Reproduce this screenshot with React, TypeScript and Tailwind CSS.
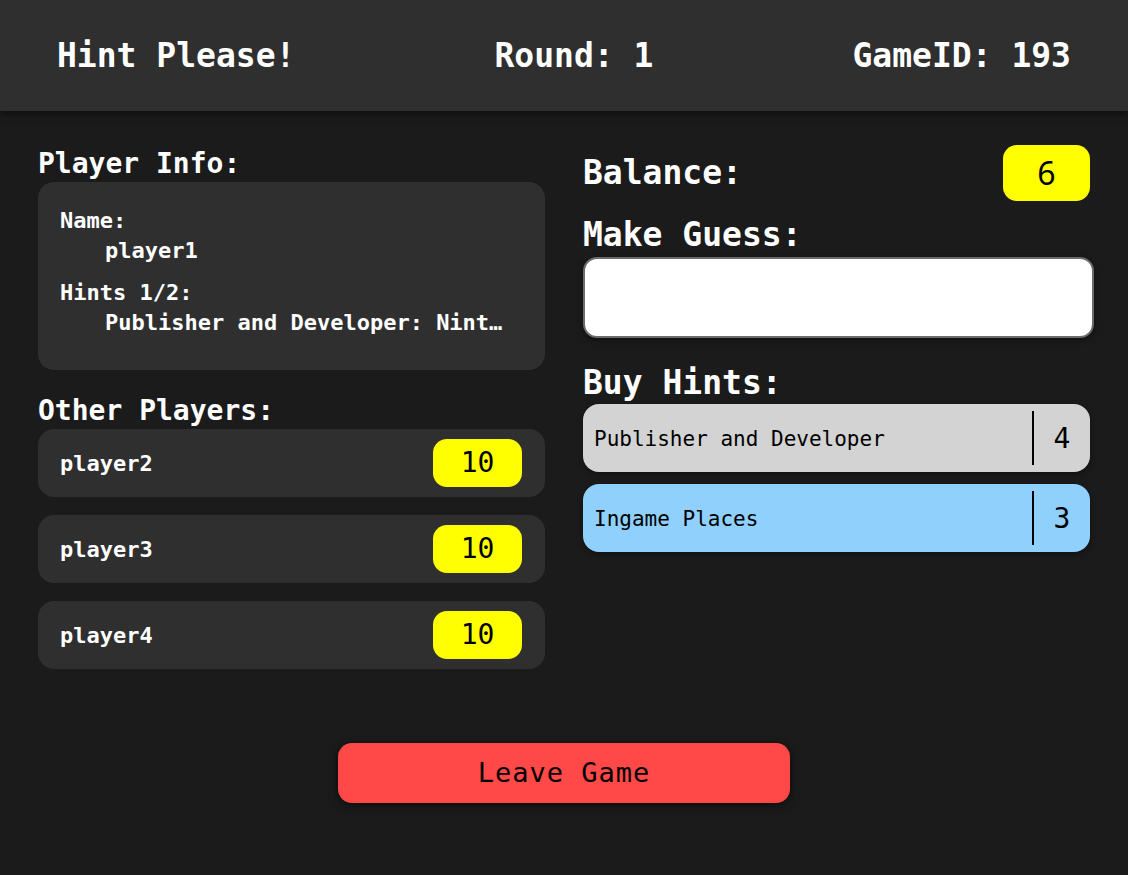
const mono = "font-['DejaVu_Sans_Mono','Liberation_Mono',monospace]";

const players = [
  { name: "player2", balance: 10 },
  { name: "player3", balance: 10 },
  { name: "player4", balance: 10 },
];

const hints = [
  { label: "Publisher and Developer", cost: 4, bg: "bg-[#d3d3d3]" },
  { label: "Ingame Places", cost: 3, bg: "bg-[#8fd0fd]" },
];

export default function App() {
  return (
    <div className={`min-h-[875px] bg-[#1b1b1b] text-white ${mono}`}>
      <header className="relative z-10 h-[111px] bg-[#2f2f2f] flex items-center justify-between px-[57px] text-[33px] font-bold shadow-[0_2px_8px_rgba(0,0,0,0.6)]">
        <span>Hint Please!</span>
        <span>Round: 1</span>
        <span>GameID: 193</span>
      </header>

      <main className="flex flex-col items-center pt-[34px]">
        <div className="w-full px-[38px] grid grid-cols-2 gap-[38px]">
          {/* left */}
          <div className="flex flex-col">
            <h2 className="text-[28px] leading-[37px] font-bold">Player Info:</h2>
            <div className="rounded-2xl bg-[#2f2f2f] pl-[22px] pr-[30px] pt-[24px] pb-[20px] text-[22px] font-bold leading-[30px]">
              <div className="mb-3">
                <div>Name:</div>
                <div className="pl-[45px]">player1</div>
              </div>
              <div className="mb-3">
                <div>Hints 1/2:</div>
                <div className="pl-[45px] whitespace-nowrap">Publisher and Developer: Nint…</div>
              </div>
            </div>

            <h2 className="mt-[22px] text-[28px] leading-[37px] font-bold">Other Players:</h2>
            <div className="flex flex-col gap-[18px]">
              {players.map((p) => (
                <div
                  key={p.name}
                  className="flex items-center justify-between rounded-2xl bg-[#2f2f2f] pl-[22px] pr-[23px] py-[10px]"
                >
                  <span className="text-[22px] font-bold">{p.name}</span>
                  <span className="w-[89px] h-[48px] rounded-[14px] bg-[#ffff00] text-black text-[28px] flex items-center justify-center">
                    {p.balance}
                  </span>
                </div>
              ))}
            </div>
          </div>

          {/* right */}
          <div className="flex flex-col">
            <div className="h-[56px] flex items-center justify-between">
              <h2 className="text-[33px] font-bold">Balance:</h2>
              <span className="w-[87px] h-[56px] rounded-[14px] bg-[#ffff00] text-black text-[32px] flex items-center justify-center font-['Noto_Sans',sans-serif]">
                6
              </span>
            </div>
            <h2 className="mt-[14px] text-[33px] leading-[40px] font-bold">Make Guess:</h2>
            <input
              type="text"
              className="mt-[2px] w-[511px] h-[81px] rounded-[14px] bg-white border-2 border-[#6b6b6b] shadow-[0_2px_6px_rgba(0,0,0,0.5)] outline-none px-4 text-black text-[22px]"
            />
            <h2 className="mt-[25px] text-[33px] leading-[40px] font-bold">Buy Hints:</h2>
            <div className="flex flex-col gap-3 mt-[1px]">
              {hints.map((h) => (
                <button
                  key={h.label}
                  className={`${h.bg} h-[68px] rounded-2xl flex items-center text-black shadow-[0_2px_6px_rgba(0,0,0,0.4)]`}
                >
                  <span className="flex-1 text-left pl-[11px] pt-[3px] text-[21px]">{h.label}</span>
                  <span className="h-[54px] w-[2px] bg-black" />
                  <span className="w-[56px] text-center pt-[2px] text-[28px]">{h.cost}</span>
                </button>
              ))}
            </div>
          </div>
        </div>

        <button className="mt-[74px] w-[452px] h-[60px] rounded-[14px] bg-[#ff4848] text-black text-[27px] tracking-[1px] shadow-[0_2px_10px_rgba(0,0,0,0.6)]">
          Leave Game
        </button>
      </main>
    </div>
  );
}
